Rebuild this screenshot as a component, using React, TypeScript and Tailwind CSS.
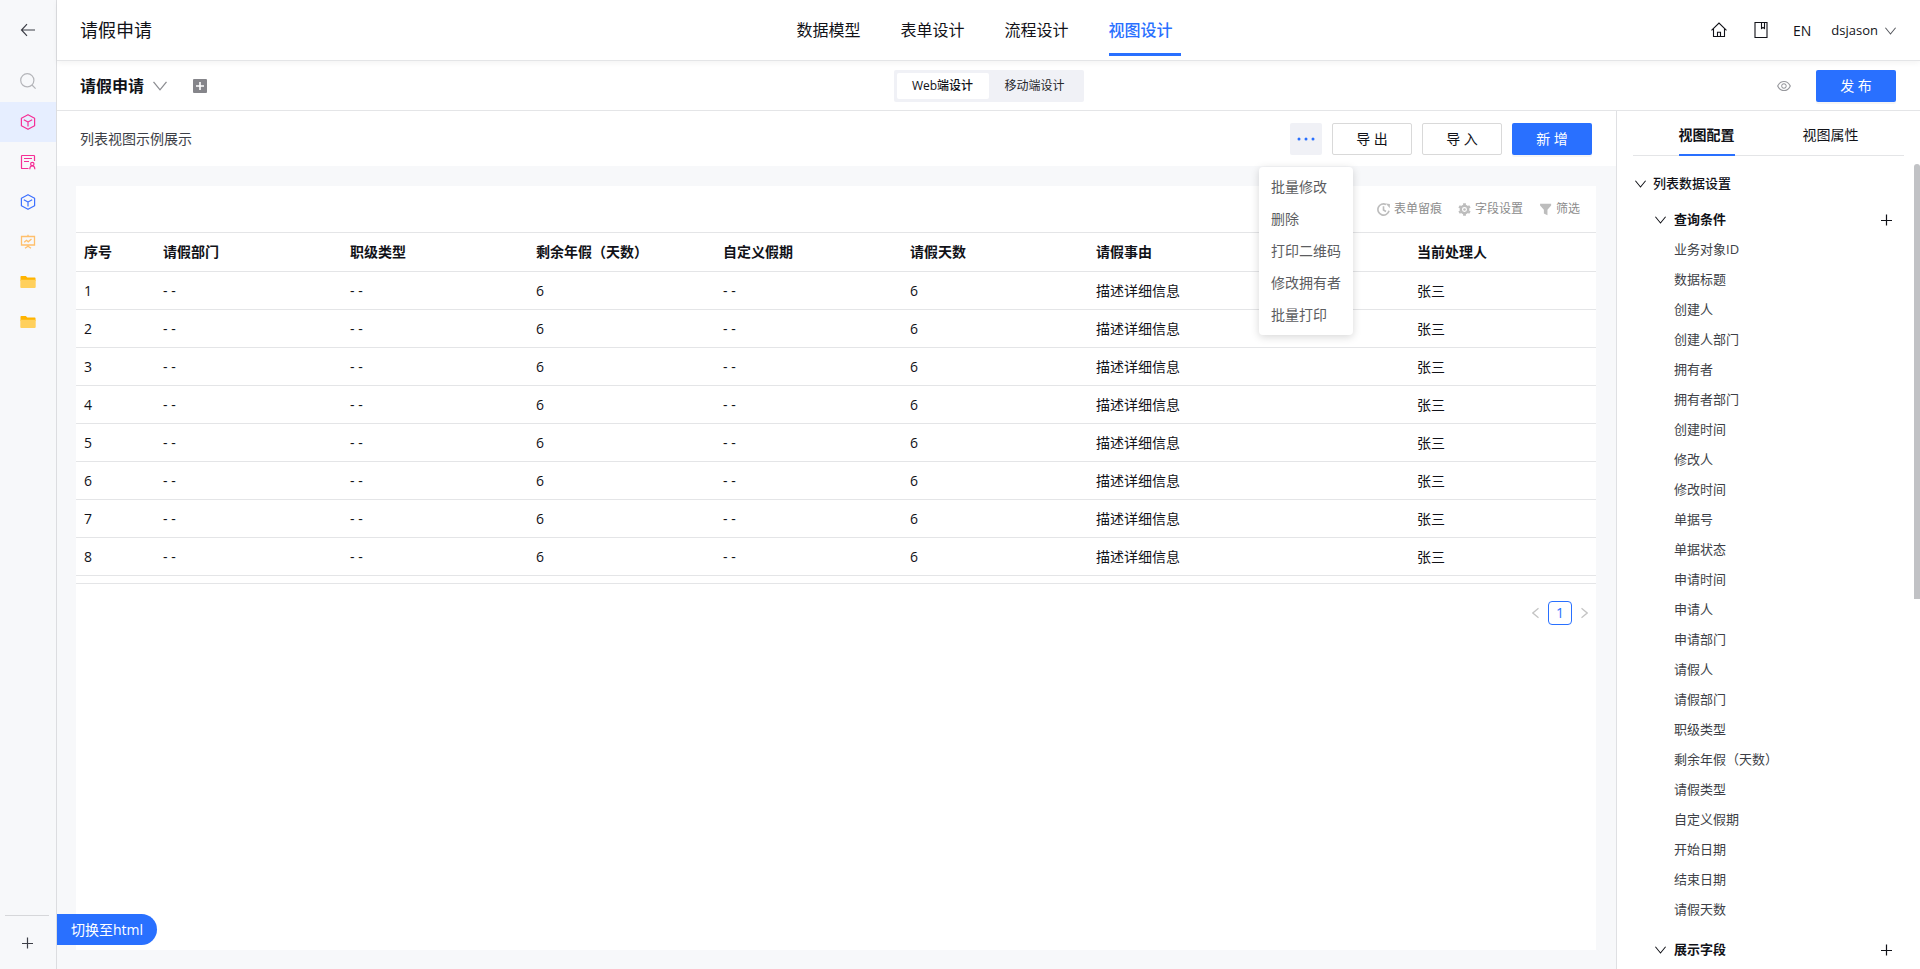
import type { ReactNode } from 'react';
import clsx from 'clsx';
import { AiOutlineEye } from 'react-icons/ai';

const designTabs = ['数据模型', '表单设计', '流程设计', '视图设计'];

const columns = [
  { title: '序号', width: 'w-[79px]' },
  { title: '请假部门', width: 'w-[187px]' },
  { title: '职级类型', width: 'w-[186px]' },
  { title: '剩余年假（天数）', width: 'w-[187px]' },
  { title: '自定义假期', width: 'w-[187px]' },
  { title: '请假天数', width: 'w-[186px]' },
  { title: '请假事由', width: '' },
  { title: '当前处理人', width: 'w-[187px]' },
];

const rows = [1, 2, 3, 4, 5, 6, 7, 8].map((n) => [
  String(n), '- -', '- -', '6', '- -', '6', '描述详细信息', '张三',
]);

const moreActions = ['批量修改', '删除', '打印二维码', '修改拥有者', '批量打印'];

const queryFields = [
  '业务对象ID', '数据标题', '创建人', '创建人部门', '拥有者', '拥有者部门',
  '创建时间', '修改人', '修改时间', '单据号', '单据状态', '申请时间', '申请人',
  '申请部门', '请假人', '请假部门', '职级类型', '剩余年假（天数）', '请假类型',
  '自定义假期', '开始日期', '结束日期', '请假天数',
];

type IconProps = { className?: string };

function Chevron({ className }: IconProps) {
  return (
    <svg className={className} viewBox="0 0 14 10" fill="none" stroke="currentColor" strokeWidth="1.3">
      <path d="M.5.8 7 8.8 13.5.8" />
    </svg>
  );
}

function PlusIcon({ className }: IconProps) {
  return (
    <svg className={className} viewBox="0 0 12 12" fill="none" stroke="currentColor" strokeWidth="1.2">
      <path d="M6.500.5v11M1 6.500h11" />
    </svg>
  );
}

function CubeIcon({ className }: IconProps) {
  return (
    <svg className={className} viewBox="0 0 16 16" fill="none" stroke="currentColor" strokeWidth="1.2" strokeLinejoin="round">
      <path d="M8 .7 14.600 4.300v7.400L8 15.300 1.400 11.700V4.300z" />
      <path d="M3.800 5.800 8 8l4.200-2.200M8 8v4.600" />
    </svg>
  );
}

function FormUserIcon({ className }: IconProps) {
  return (
    <svg className={className} viewBox="0 0 16 16" fill="none" stroke="currentColor" strokeWidth="1.200">
      <path d="M8.500 14.500H2.100a.6.6 0 0 1-.6-.6V2.100a.6.6 0 0 1 .6-.6h11.800a.6.6 0 0 1 .6.600v5" />
      <path d="M4 4.500h8M4 7.500h5" />
      <circle cx="12.300" cy="10" r="1.700" />
      <path d="M9.800 15.200c0-2 1-3.400 2.500-3.400s2.500 1.400 2.500 3.400" />
    </svg>
  );
}

function BoardIcon({ className }: IconProps) {
  return (
    <svg className={className} viewBox="0 0 16 16" fill="none" stroke="currentColor" strokeWidth="1.300">
      <path d="M1.500 2.500h13v8.500h-13zM8 .8v1.700M8 11v2M5 14.300 8 12.300l3 2" />
      <path d="m4.200 8.300 2.300-2 1.700 1.500L11.500 5" />
    </svg>
  );
}

function FolderIcon({ className }: IconProps) {
  return (
    <svg className={className} viewBox="0 0 16 14">
      <path d="M.5 1.800A.8.8 0 0 1 1.300 1h4.500l1.500 1.500h7.400a.8.8 0 0 1 .8.800V6H.5z" fill="#ffb400" />
      <path d="M.3 4.800h15.400v7.100a1.100 1.100 0 0 1-1.100 1.100H1.400A1.100 1.100 0 0 1 .3 11.900z" fill="#ffd05c" />
    </svg>
  );
}

function SideItem({ label, active, children }: { label: string; active?: boolean; children: ReactNode }) {
  return (
    <button
      type="button"
      aria-label={label}
      className={clsx('flex h-10 w-full items-center justify-center', active && 'bg-[#e6eeff]')}
    >
      {children}
    </button>
  );
}

function Sidebar() {
  return (
    <nav className="flex w-[57px] shrink-0 flex-col border-r border-[#dcdde0] bg-[#f7f8fa]">
      <button type="button" aria-label="返回" className="flex h-[60px] items-center justify-center">
        <svg className="h-4 w-4 text-[#3d3f47]" viewBox="0 0 16 16" fill="none" stroke="currentColor" strokeWidth="1.2">
          <path d="M7 2.200 1.500 8 7 13.800M1.500 8H15" />
        </svg>
      </button>
      <button type="button" aria-label="搜索" className="flex h-[42px] items-center justify-center">
        <svg className="h-4 w-4 text-[#b4b5b9]" viewBox="0 0 16 16" fill="none" stroke="currentColor" strokeWidth="1.200">
          <circle cx="7.300" cy="7.300" r="6.600" />
          <path d="m12 12 3.600 3.600" />
        </svg>
      </button>
      <SideItem label="请假申请" active>
        <CubeIcon className="h-4 w-4 text-[#f52f96]" />
      </SideItem>
      <SideItem label="表单">
        <FormUserIcon className="h-4 w-4 text-[#f52f96]" />
      </SideItem>
      <SideItem label="模型">
        <CubeIcon className="h-4 w-4 text-[#3d70ff]" />
      </SideItem>
      <SideItem label="报表">
        <BoardIcon className="h-4 w-4 text-[#ffbf6b]" />
      </SideItem>
      <SideItem label="文件夹一">
        <FolderIcon className="h-[14px] w-4" />
      </SideItem>
      <SideItem label="文件夹二">
        <FolderIcon className="h-[14px] w-4" />
      </SideItem>
      <div className="mt-auto px-[5px]">
        <button
          type="button"
          aria-label="新建"
          className="flex h-[54px] w-11 items-center justify-center border-t border-[#d6d7da]"
        >
          <PlusIcon className="h-3 w-3 text-[#3d3f47]" />
        </button>
      </div>
    </nav>
  );
}

function Header() {
  return (
    <header className="relative z-10 grid h-[61px] shrink-0 grid-cols-[1fr_auto_1fr] border-b border-[#e4e5e7] bg-white shadow-[0_2px_6px_rgba(0,0,0,0.05)]">
      <h1 className="flex items-center pl-[23px] text-lg">请假申请</h1>
      <nav className="flex gap-8">
        {designTabs.map((tab) => {
          const active = tab === '视图设计';
          return (
            <a
              key={tab}
              href="#"
              className={clsx(
                'mb-1 flex w-[72px] items-center border-b-3 pt-[7px] text-base',
                active ? 'border-[#2970ff] font-medium text-[#2970ff]' : 'border-transparent',
              )}
            >
              {tab}
            </a>
          );
        })}
      </nav>
      <div className="flex items-center justify-end pr-6">
        <button type="button" aria-label="首页">
          <svg className="h-4 w-4" viewBox="0 0 16 16" fill="none" stroke="currentColor" strokeWidth="1.100">
            <path d="M.5 8.300 8 1l7.500 7.300" />
            <path d="M2.500 6.600v7.900h11V6.600M6.500 14.300v-4h3v4" />
          </svg>
        </button>
        <button type="button" aria-label="文档" className="ml-[27px]">
          <svg className="h-4 w-3.5" viewBox="0 0 14 16" fill="none" stroke="currentColor" strokeWidth="1.100">
            <path d="M1 .5h12v15H1zM7.500.5v6L9 5.500l1.500 1v-6" />
          </svg>
        </button>
        <button type="button" className="ml-[25px] pt-0.5 text-sm">EN</button>
        <button type="button" className="ml-5 flex items-center gap-[7px] pt-0.5 text-[13px]">
          dsjason
          <Chevron className="h-2 w-[11px] text-[#55575d]" />
        </button>
      </div>
    </header>
  );
}

function SubHeader() {
  return (
    <div className="grid h-[50px] shrink-0 grid-cols-[1fr_auto_1fr] items-center border-b border-[#e4e5e7] bg-white">
      <div className="flex items-center pl-[23px]">
        <h2 className="text-base font-bold">请假申请</h2>
        <button type="button" aria-label="切换视图" className="ml-[9px]">
          <Chevron className="h-2.5 w-3.5 text-[#8c8d92]" />
        </button>
        <button type="button" aria-label="新增视图" className="ml-[26px]">
          <svg className="h-3.5 w-3.5" viewBox="0 0 14 14">
            <rect width="14" height="14" rx="1" fill="#85858a" />
            <path d="M7 3v8M3 7h8" stroke="#fff" strokeWidth="1.600" />
          </svg>
        </button>
      </div>
      <div className="flex h-8 rounded-xs bg-[#f0f1f6] p-[3px] text-xs">
        <button type="button" className="w-[92px] rounded-xs bg-white font-medium">Web端设计</button>
        <button type="button" className="w-[92px] text-[#26272b]">移动端设计</button>
      </div>
      <div className="flex items-center justify-end gap-6 pr-6">
        <button type="button" aria-label="预览">
          <AiOutlineEye className="h-4 w-4 text-[#97989d]" />
        </button>
        <PrimaryButton>发 布</PrimaryButton>
      </div>
    </div>
  );
}

function PrimaryButton({ children }: { children: ReactNode }) {
  return (
    <button
      type="button"
      className="h-8 w-20 rounded-xs bg-[#2970ff] text-sm text-white shadow-[0_2px_0_rgba(0,0,0,0.04)]"
    >
      {children}
    </button>
  );
}

function OutlineButton({ children }: { children: ReactNode }) {
  return (
    <button type="button" className="h-8 w-20 rounded-xs border border-[#d9d9d9] bg-white text-sm">
      {children}
    </button>
  );
}

function MoreMenu() {
  return (
    <div className="relative h-8">
      <button
        type="button"
        aria-label="更多"
        className="flex h-8 w-8 items-center justify-center rounded-xs bg-[#f0f1f6] text-[#2970ff]"
      >
        <svg className="h-1 w-[18px]" viewBox="0 0 18 4" fill="currentColor">
          <circle cx="2" cy="2" r="1.500" />
          <circle cx="9" cy="2" r="1.500" />
          <circle cx="16" cy="2" r="1.500" />
        </svg>
      </button>
      <ul className="absolute top-11 left-1/2 z-20 -translate-x-1/2 rounded-sm bg-white py-1 shadow-[0_2px_8px_rgba(0,0,0,0.16)]">
        {moreActions.map((action) => (
          <li key={action}>
            <button type="button" className="h-8 px-3 text-left text-sm whitespace-nowrap text-[#5c5d61]">
              {action}
            </button>
          </li>
        ))}
      </ul>
    </div>
  );
}

function TableTools() {
  return (
    <div className="flex h-[46px] items-center justify-end gap-4 pr-4 text-xs text-[#8c8c8c]">
      <button type="button" className="flex items-center gap-1">
        <svg className="h-[13px] w-[13px] text-[#bdbdbd]" viewBox="0 0 12 12" fill="none" stroke="currentColor" strokeWidth="1.500">
          <path d="M8.300 1.300A5.200 5.200 0 1 0 11.100 7.200M6 3v3.500l2.300 1.400" />
          <path d="M8 .4 11.900 1v3.800z" fill="currentColor" stroke="none" />
        </svg>
        表单留痕
      </button>
      <button type="button" className="flex items-center gap-1">
        <svg className="h-[13px] w-[13px] text-[#bdbdbd]" viewBox="0 0 12 12" fill="none" stroke="currentColor">
          <circle cx="6" cy="6" r="3.400" strokeWidth="2.200" />
          <circle cx="6" cy="6" r="1.200" fill="currentColor" stroke="none" />
          <path d="M6 .2v1.600M6 10.200v1.600M1 3.100l1.400.8M9.600 8.100l1.400.8M1 8.900l1.400-.8M9.600 3.900l1.400-.8" strokeWidth="2.600" />
        </svg>
        字段设置
      </button>
      <button type="button" className="flex items-center gap-1">
        <svg className="h-[13px] w-[13px] text-[#bdbdbd]" viewBox="0 0 12 12" fill="currentColor">
          <path d="M1 .8h10.200v1.600L7.800 6.200v5.200L4.500 9.800V6.200L1 2.400z" />
        </svg>
        筛选
      </button>
    </div>
  );
}

function DataTable() {
  return (
    <div className="border-b border-[#e4e5e7] pb-[7px]">
      <table className="w-full table-fixed border-separate border-spacing-0 text-left text-sm">
        <thead>
          <tr>
            {columns.map((col) => (
              <th
                key={col.title}
                className={clsx('h-10 border-y border-[#e4e5e7] px-2 font-bold whitespace-nowrap', col.width)}
              >
                {col.title}
              </th>
            ))}
          </tr>
        </thead>
        <tbody>
          {rows.map((row) => (
            <tr key={row[0]}>
              {row.map((cell, i) => (
                <td key={i} className="h-[38px] border-b border-[#e4e5e7] px-2">
                  {cell}
                </td>
              ))}
            </tr>
          ))}
        </tbody>
      </table>
    </div>
  );
}

function Pagination() {
  return (
    <div className="mt-[17px] flex h-6 items-center justify-end gap-[9px] pr-2 text-[#c4c4c4]">
      <button type="button" aria-label="上一页">
        <svg className="h-3 w-[7px]" viewBox="0 0 7 12" fill="none" stroke="currentColor" strokeWidth="1.300">
          <path d="M6.500 1.200.8 6l5.700 4.800" />
        </svg>
      </button>
      <button type="button" className="h-6 w-6 rounded-sm border border-[#2970ff] text-sm leading-5 text-[#2970ff]">
        1
      </button>
      <button type="button" aria-label="下一页">
        <svg className="h-3 w-[7px]" viewBox="0 0 7 12" fill="none" stroke="currentColor" strokeWidth="1.300">
          <path d="M.5 1.200 6.200 6 .5 10.800" />
        </svg>
      </button>
    </div>
  );
}

function SectionTitle({ title }: { title: string }) {
  return (
    <div className="flex h-[30px] items-center pr-7 pl-[38px]">
      <Chevron className="h-2 w-[11px] text-[#111218]" />
      <h4 className="ml-2 text-[13px] font-bold">{title}</h4>
      <button type="button" aria-label={`添加${title}`} className="ml-auto">
        <PlusIcon className="h-3 w-3 text-[#111218]" />
      </button>
    </div>
  );
}

function ConfigPanel() {
  return (
    <aside className="flex w-[304px] shrink-0 flex-col border-l border-[#dfe0e3] bg-white">
      <div className="mx-4 flex h-[45px] shrink-0 justify-center gap-[68px] border-b border-[#e4e5e7] text-sm">
        <button type="button" className="-mb-px border-b-2 border-[#2970ff] pt-1 font-bold">视图配置</button>
        <button type="button" className="-mb-px border-b-2 border-transparent pt-1">视图属性</button>
      </div>
      <div className="relative mt-2 min-h-0 flex-1 overflow-hidden pt-[5px]">
        <div className="flex h-[30px] items-center pl-[18px]">
          <Chevron className="h-2 w-[11px] text-[#111218]" />
          <h3 className="ml-[7px] text-[13px] font-medium">列表数据设置</h3>
        </div>
        <div className="mt-1.5">
          <SectionTitle title="查询条件" />
          <ul className="mb-2.5 pl-[57px] text-[13px] text-[#3d3f47]">
            {queryFields.map((field) => (
              <li key={field} className="flex h-[30px] items-center">{field}</li>
            ))}
          </ul>
          <SectionTitle title="展示字段" />
        </div>
        {/* Scroll thumb */}
        <div className="absolute top-0 right-0 h-[54%] w-1.5 rounded-t-full bg-[#c1c2c5]" />
      </div>
    </aside>
  );
}

export default function App() {
  return (
    <div className="flex h-screen overflow-hidden bg-[#f7f8fa] font-['Open_Sans','Noto_Sans_CJK_SC',sans-serif] text-[#111218]">
      <Sidebar />
      <div className="flex min-w-0 flex-1 flex-col">
        <Header />
        <SubHeader />
        <div className="flex min-h-0 flex-1">
          <main className="relative flex min-w-0 flex-1 flex-col">
            <div className="flex h-[55px] shrink-0 items-center bg-white pr-6 pl-[23px]">
              <p className="text-sm text-[#3d3f47]">列表视图示例展示</p>
              <div className="ml-auto flex gap-2.5">
                <MoreMenu />
                <OutlineButton>导 出</OutlineButton>
                <OutlineButton>导 入</OutlineButton>
                <PrimaryButton>新 增</PrimaryButton>
              </div>
            </div>
            <section className="mt-5 mr-5 mb-[19px] ml-[19px] flex-1 bg-white">
              <TableTools />
              <DataTable />
              <Pagination />
            </section>
            <button
              type="button"
              className="absolute bottom-6 left-0 h-[31px] rounded-r-full bg-[#2970ff] px-3.5 text-sm text-white"
            >
              切换至html
            </button>
          </main>
          <ConfigPanel />
        </div>
      </div>
    </div>
  );
}
